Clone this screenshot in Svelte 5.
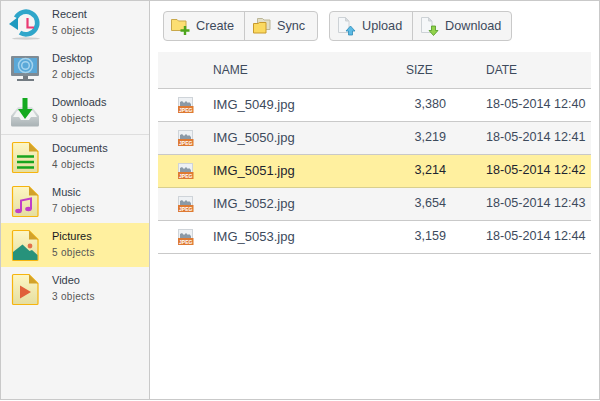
<script>
	const topFolders = [
		{ name: 'Recent', count: 5, icon: 'recent' },
		{ name: 'Desktop', count: 2, icon: 'desktop' },
		{ name: 'Downloads', count: 9, icon: 'downloads' }
	];
	const typeFolders = [
		{ name: 'Documents', count: 4, icon: 'documents' },
		{ name: 'Music', count: 7, icon: 'music' },
		{ name: 'Pictures', count: 5, icon: 'pictures', active: true },
		{ name: 'Video', count: 3, icon: 'video' }
	];
	const files = [
		{ name: 'IMG_5049.jpg', size: '3,380', date: '18-05-2014 12:40' },
		{ name: 'IMG_5050.jpg', size: '3,219', date: '18-05-2014 12:41' },
		{ name: 'IMG_5051.jpg', size: '3,214', date: '18-05-2014 12:42', active: true },
		{ name: 'IMG_5052.jpg', size: '3,654', date: '18-05-2014 12:43' },
		{ name: 'IMG_5053.jpg', size: '3,159', date: '18-05-2014 12:44' }
	];
</script>

{#snippet folderIcon(icon)}
	<svg class="folder-icon" viewBox="0 0 40 40" width="40" height="40">
		<defs>
			<linearGradient id="paper" x1="0" y1="0" x2="0" y2="1">
				<stop offset="0" stop-color="#fdf6c4" />
				<stop offset="1" stop-color="#e5dea0" />
			</linearGradient>
			<linearGradient id="tray" x1="0" y1="0" x2="0" y2="1">
				<stop offset="0" stop-color="#dfe3e4" />
				<stop offset="1" stop-color="#a9b2b5" />
			</linearGradient>
		</defs>
		{#if icon === 'recent'}
			<ellipse cx="19" cy="35.500" rx="14" ry="1.200" fill="#cfcfcf" />
			<path d="M9 14.700A11.300 11.300 0 1 1 13 29.600" fill="none" stroke="#2fa6ca" stroke-width="4.600" />
			<path d="M2 21L11 14V27z" fill="#1e9ac0" />
			<path d="M20.500 15v9.500h6.500" fill="none" stroke="#ea3a72" stroke-width="2.200" />
		{:else if icon === 'desktop'}
			<rect x="4" y="9" width="28" height="20" rx="1" fill="#7f8b94" />
			<rect x="7" y="11" width="23" height="15" fill="#5aa8d8" />
			<circle cx="18.500" cy="18.500" r="7" fill="none" stroke="#a5d4ee" stroke-width="1.500" />
			<circle cx="18.500" cy="18.500" r="3.800" fill="none" stroke="#a5d4ee" stroke-width="1.500" />
			<path d="M16 29h5v3h6v2H10v-2h6z" fill="#737b82" />
		{:else if icon === 'downloads'}
			<path d="M4 25l7-9h14l7 9v9a1.500 1.500 0 0 1-1.500 1.500h-25A1.500 1.500 0 0 1 4 34z" fill="url(#tray)" />
			<path d="M10 20h16l4 6h-6l-2 3h-8l-2-3H6z" fill="#f2f4f4" />
			<path d="M15.500 7h5v11h5l-7.500 10L11 18h4.500z" fill="#13a91f" />
		{:else}
			<path d="M6.500 5.500h15.500l9 9v20a1 1 0 0 1-1 1h-23.500a1 1 0 0 1-1-1v-28a1 1 0 0 1 1-1z" fill="url(#paper)" stroke="#f6b40e" stroke-width="1.200" />
			<path d="M22 5.500l9 9h-9z" fill="#d2a22b" />
			{#if icon === 'documents'}
				<path d="M10 19.500h17M10 25h17M10 30.500h17" stroke="#19a51f" stroke-width="2.500" />
			{:else if icon === 'music'}
				<path d="M14 30V19.500l10-2V28" fill="none" stroke="#c03fc8" stroke-width="2" />
				<ellipse cx="11.500" cy="30" rx="3.300" ry="2.200" fill="#c03fc8" />
				<ellipse cx="21.500" cy="28" rx="3.300" ry="2.200" fill="#c03fc8" />
			{:else if icon === 'pictures'}
				<path d="M6 35v-8l9.500-7.500 7 6.500 2.500-1 5.500 5v5z" fill="#27927b" />
				<circle cx="23" cy="21" r="2.400" fill="#e2704a" />
			{:else if icon === 'video'}
				<path d="M13 16.500l11 6.500-11 6.500z" fill="#e0603a" />
			{/if}
		{/if}
	</svg>
{/snippet}

{#snippet folderRow(item)}
	<li class="folder" class:active={item.active}>
		{@render folderIcon(item.icon)}
		<div class="folder-text">
			<span class="folder-name">{item.name}</span>
			<span class="folder-count">{item.count} objects</span>
		</div>
	</li>
{/snippet}

{#snippet pageIcon(dir)}
	<svg viewBox="0 0 20 20" width="20" height="20">
		<path d="M1.500 1.500h7l3.500 3.500v11.500H1.500z" fill="#f5f7f9" stroke="#cdd2d6" />
		<path d="M8.500 1.500V5H12z" fill="#d7dbde" stroke="#cdd2d6" />
		{#if dir === 'up'}
			<path d="M13.500 10l4.500 5h-2.500v4h-4v-4H9z" fill="#5cbae4" stroke="#2f8cb8" stroke-width=".8" />
		{:else}
			<path d="M11.500 10h4v4.500H18L13.500 19.500 9 14.500h2.500z" fill="#93d24c" stroke="#4f9a22" stroke-width=".8" />
		{/if}
	</svg>
{/snippet}

<div class="app">
	<aside class="sidebar">
		<ul class="group first">
			{#each topFolders as item}
				{@render folderRow(item)}
			{/each}
		</ul>
		<ul class="group">
			{#each typeFolders as item}
				{@render folderRow(item)}
			{/each}
		</ul>
	</aside>

	<main class="content">
		<div class="toolbar">
			<div class="btn-group">
				<button class="create">
					<svg viewBox="0 0 20 20" width="20" height="20">
						<path d="M.5 3.500h5.500l1.500 1.500h7.500v9.500H.5z" fill="#fcdf72" stroke="#c9a84a" />
						<path d="M9.500 14.500h9M14 10v9" stroke="#4ea51c" stroke-width="2.400" />
					</svg>
					Create
				</button>
				<button class="sync">
					<svg viewBox="0 0 20 20" width="20" height="20">
						<path d="M5.500 2.500h5l1.500 1.500h6v9.500h-12.500z" fill="#e2dec6" stroke="#bcb697" />
						<path d="M1.500 7.500h4.500l1.500-1h6.500v10.500H1.500z" fill="#fbd95f" stroke="#c99a2c" />
					</svg>
					Sync
				</button>
			</div>
			<div class="btn-group">
				<button class="upload">
					{@render pageIcon('up')}
					Upload
				</button>
				<button class="download">
					{@render pageIcon('down')}
					Download
				</button>
			</div>
		</div>

		<table>
			<thead>
				<tr>
					<th class="col-icon"></th>
					<th class="col-name">NAME</th>
					<th class="col-size">SIZE</th>
					<th class="col-date">DATE</th>
				</tr>
			</thead>
			<tbody>
				{#each files as file}
					<tr class:active={file.active}>
						<td class="col-icon">
							<svg viewBox="0 0 16 16" width="16" height="16">
								<rect x=".5" y=".5" width="14" height="9" fill="#eef1f4" stroke="#cfd4d9" />
								<path d="M2 9V5l2-1 2 2 2-2 2 2 1-1 2 2v2z" fill="#8b99a6" />
								<rect y="9" width="15.500" height="7" fill="#de7a33" />
								<text x="1" y="14.500" class="jpeg" textLength="13.500" lengthAdjust="spacingAndGlyphs">JPEG</text>
							</svg>
						</td>
						<td class="col-name">{file.name}</td>
						<td class="col-size num">{file.size}</td>
						<td class="col-date">{file.date}</td>
					</tr>
				{/each}
			</tbody>
		</table>
	</main>
</div>

<style>
	:global(body) {
		margin: 0;
	}
	.app {
		display: flex;
		box-sizing: border-box;
		width: 600px;
		height: 400px;
		border: 1px solid #c9c9c9;
		font-family: 'Liberation Sans', Arial, sans-serif;
		color: #3d4a5c;
		background: #fff;
	}
	.sidebar {
		flex: none;
		width: 148px;
		background: #f5f5f5;
		border-right: 1px solid #c9c9c9;
	}
	.group {
		list-style: none;
		margin: 0;
		padding: 0;
	}
	.group.first {
		padding-bottom: 1px;
		border-bottom: 1px solid #dedede;
	}
	.folder {
		display: flex;
		align-items: flex-start;
		height: 44px;
		padding: 0 0 0 6px;
	}
	.folder.active {
		background: #fff09f;
	}
	.folder-icon {
		flex: none;
		margin-top: 2px;
	}
	.folder-text {
		display: flex;
		flex-direction: column;
		margin-left: 5px;
		padding-top: 5px;
	}
	.folder-name {
		font-size: 11px;
		line-height: 16px;
		color: #333c4a;
	}
	.folder-count {
		font-size: 10px;
		letter-spacing: 0.3px;
		line-height: 16px;
		margin-top: 1px;
		color: #555;
	}
	.folder.active .folder-name {
		color: #15181c;
	}
	.content {
		flex: 1;
		padding: 10px 8px 0 8px;
		min-width: 0;
	}
	.toolbar {
		display: flex;
		gap: 11px;
		height: 41px;
		padding-left: 5px;
	}
	.btn-group {
		display: flex;
		height: 30px;
		box-sizing: border-box;
		border: 1px solid #c9c9c9;
		border-radius: 4px;
		background: #f5f5f5;
	}
	button {
		display: flex;
		align-items: center;
		gap: 5px;
		box-sizing: border-box;
		padding: 0 0 0 7px;
		border: 0;
		border-left: 1px solid #c9c9c9;
		background: none;
		font: 12.7px 'Liberation Sans', Arial, sans-serif;
		color: #3d4a5c;
	}
	button:first-child {
		border-left: 0;
	}
	.create {
		width: 80px;
	}
	.sync {
		width: 73px;
	}
	.upload {
		width: 82px;
	}
	.download {
		width: 99px;
	}
	table {
		width: 433px;
		border-collapse: collapse;
		table-layout: fixed;
		font-size: 12.6px;
	}
	th {
		height: 36px;
		padding: 0;
		font-size: 12px;
		font-weight: normal;
		text-align: left;
		background: #f5f5f5;
		border-bottom: 1px solid #c9c9c9;
		color: #3d4a5c;
	}
	td {
		height: 30px;
		padding: 0 0 2px;
		border-bottom: 1px solid #c9c9c9;
	}
	td.col-name {
		font-size: 13px;
	}
	tbody tr:nth-child(even) td {
		background: #f5f5f5;
	}
	tbody tr.active td {
		background: #fff09f;
		border-bottom-color: #d9cf8e;
		color: #1c2430;
	}
	th.col-icon {
		width: 55px;
	}
	td.col-icon {
		height: 32px;
		padding: 0 0 0 20px;
		line-height: 0;
	}
	.col-name {
		width: 193px;
	}
	.col-size {
		width: 80px;
	}
	td.num {
		text-align: right;
		padding-right: 40px;
		box-sizing: border-box;
	}
	.jpeg {
		font-size: 5.500px;
		font-weight: bold;
		fill: #fff;
		font-family: 'Liberation Sans', Arial, sans-serif;
	}
</style>
